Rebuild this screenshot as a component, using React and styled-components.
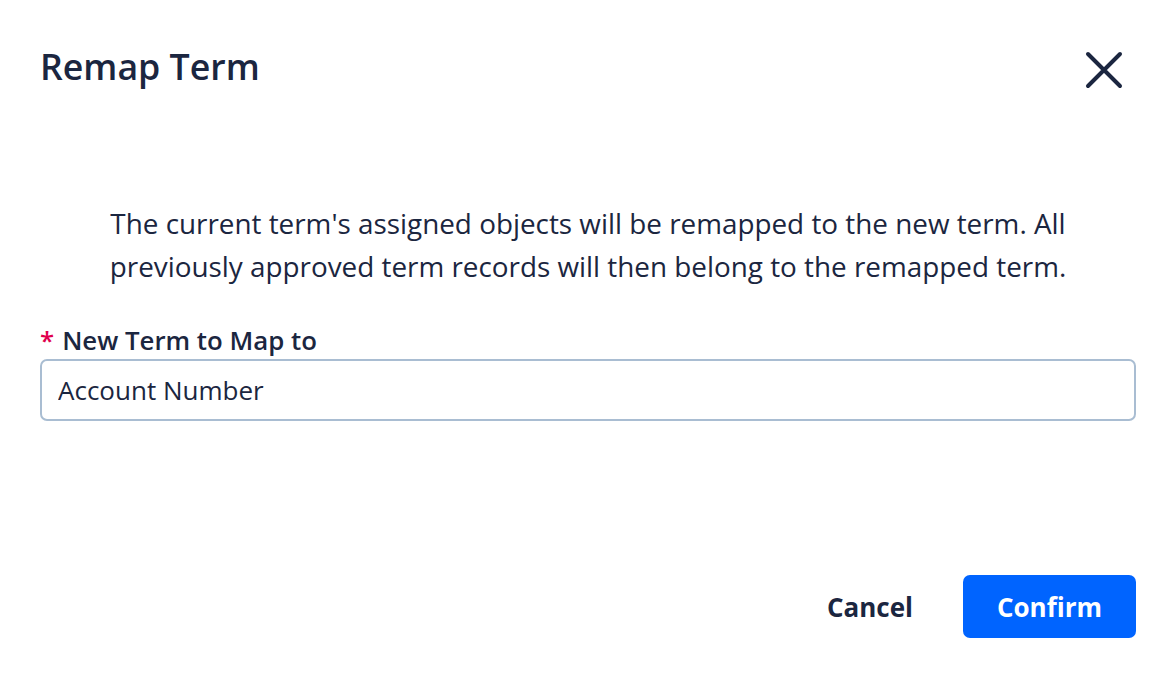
import React, { useState } from "react";
import styled, { createGlobalStyle } from "styled-components";

const GlobalStyle = createGlobalStyle`
  html, body {
    margin: 0;
    padding: 0;
    background: #ffffff;
  }
  body {
    font-family: "Open Sans", "Noto Sans", "Liberation Sans", sans-serif;
    color: #1b2640;
  }
  * { box-sizing: border-box; }
`;

//Modal frame
const Modal = styled.div`
  width: 1176px;
  height: 678px;
  display: flex;
  flex-direction: column;
  padding: 40px 40px 40px 40px;
  background: #ffffff;
`;

//HEADER CSS
const Header = styled.div`
  display: flex;
  align-items: center;
  justify-content: space-between;
`;

const Title = styled.h1`
  margin: 0;
  font-size: 35.7px;
  line-height: 52px;
  font-weight: 600;
  color: #1b2640;
`;

const CloseButton = styled.button`
  border: none;
  background: none;
  padding: 0;
  margin-right: 11px;
  margin-top: 8px;
  width: 42px;
  height: 42px;
  display: flex;
  align-items: center;
  justify-content: center;
  cursor: pointer;
  color: #1b2640;
`;

//BODY CSS
const Body = styled.div`
  flex: 1;
  display: flex;
  flex-direction: column;
`;

const Message = styled.p`
  margin: 110px 0 0 0;
  text-align: center;
  font-size: 27.85px;
  line-height: 43px;
  color: #1b2640;
`;

const Label = styled.label`
  margin-top: 37px;
  display: flex;
  gap: 8px;
  font-size: 25.8px;
  line-height: 30px;
  font-weight: 600;
  color: #1b2640;
`;

const Required = styled.span`
  color: #e0004d;
`;

const Input = styled.input`
  margin-top: 4px;
  width: 100%;
  height: 62px;
  border: 2px solid #a9bdd2;
  border-radius: 7px;
  padding: 0 16px;
  font-family: inherit;
  font-size: 26px;
  color: #1b2640;
  outline: none;
`;

//FOOTER CSS
const Footer = styled.div`
  display: flex;
  justify-content: flex-end;
  align-items: center;
  gap: 50px;
`;

const Button = styled.button`
  height: 63px;
  border-radius: 7px;
  border: none;
  font-family: inherit;
  font-size: 26px;
  font-weight: 700;
  cursor: pointer;
  padding: 0;
  width: ${(p) => (p.$primary ? "173px" : "auto")};
  background: ${(p) => (p.$primary ? "#0064ff" : "transparent")};
  color: ${(p) => (p.$primary ? "#ffffff" : "#1b2640")};
`;

function CloseIcon() {
  return (
    <svg width="38" height="38" viewBox="0 0 38 38" fill="none">
      <path
        d="M3 3L35 35M35 3L3 35"
        stroke="currentColor"
        strokeWidth="4"
        strokeLinecap="round"
      />
    </svg>
  );
}

export default function App() {
  const [term, setTerm] = useState("Account Number");

  return (
    <>
      <GlobalStyle />
      <Modal>
        <Header>
          <Title>Remap Term</Title>
          <CloseButton aria-label="Close">
            <CloseIcon />
          </CloseButton>
        </Header>
        <Body>
          <Message>
            The current term's assigned objects will be remapped to the new term. All
            <br />
            previously approved term records will then belong to the remapped term.
          </Message>
          <Label>
            <Required>*</Required>
            New Term to Map to
          </Label>
          <Input value={term} onChange={(e) => setTerm(e.target.value)} />
        </Body>
        <Footer>
          <Button>Cancel</Button>
          <Button $primary>Confirm</Button>
        </Footer>
      </Modal>
    </>
  );
}
